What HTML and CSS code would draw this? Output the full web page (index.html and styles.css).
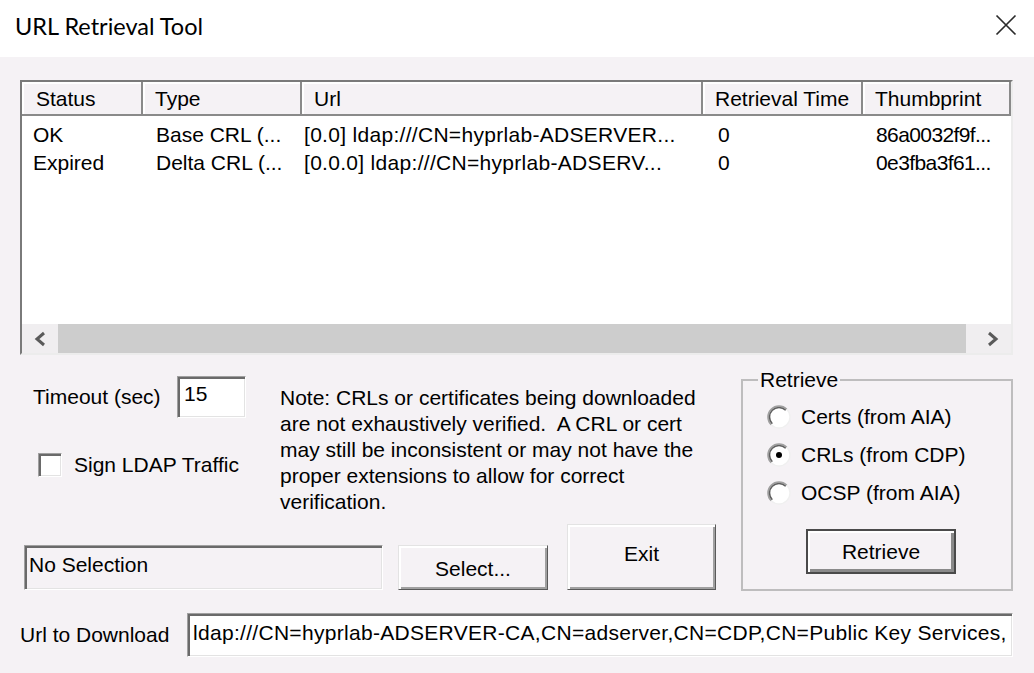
FILE: index.html
```html
<!DOCTYPE html>
<html>
<head>
<meta charset="utf-8">
<title>URL Retrieval Tool</title>
<link rel="stylesheet" href="styles.css">
</head>
<body>
<div class="window">
  <div class="titlebar">
    <span class="title">URL Retrieval Tool</span>
    <span class="close"><svg width="22" height="22" viewBox="0 0 22 22"><path d="M1.5 1.5L20.5 20.5M20.5 1.5L1.5 20.5" stroke="#2b2b2b" stroke-width="1.7" fill="none"/></svg></span>
  </div>
  <div class="client">
    <div class="list">
      <div class="hdr">
        <div class="hc c1">Status</div>
        <div class="hc c2">Type</div>
        <div class="hc c3">Url</div>
        <div class="hc c4">Retrieval Time</div>
        <div class="hc c5">Thumbprint</div>
      </div>
      <div class="rows">
        <div class="row">
          <div class="cell c1 p1">OK</div>
          <div class="cell c2 p2">Base CRL (...</div>
          <div class="cell c3 p3">[0.0] ldap:///CN=hyprlab-ADSERVER...</div>
          <div class="cell c4 p4">0</div>
          <div class="cell c5 p5">86a0032f9f...</div>
        </div>
        <div class="row">
          <div class="cell c1 p1">Expired</div>
          <div class="cell c2 p2">Delta CRL (...</div>
          <div class="cell c3 p3">[0.0.0] ldap:///CN=hyprlab-ADSERV...</div>
          <div class="cell c4 p4">0</div>
          <div class="cell c5 p5">0e3fba3f61...</div>
        </div>
      </div>
      <div class="hscroll">
        <div class="sbtn"><svg width="14" height="16" viewBox="0 0 14 16"><path d="M11 2L4 8L11 14" stroke="#5a5a5a" stroke-width="3" fill="none"/></svg></div>
        <div class="track"><div class="thumb"></div></div>
        <div class="sbtn"><svg width="14" height="16" viewBox="0 0 14 16"><path d="M3 2L10 8L3 14" stroke="#5a5a5a" stroke-width="3" fill="none"/></svg></div>
      </div>
    </div>

    <div class="middle">
      <div class="left">
        <div class="upper">
          <div class="opts">
            <div class="timeout">
              <span class="tlabel">Timeout (sec)</span>
              <div class="edit tbox">15</div>
            </div>
            <div class="check"><span class="box"></span><span>Sign LDAP Traffic</span></div>
          </div>
          <p class="note">Note: CRLs or certificates being downloaded<br>are not exhaustively verified.&nbsp; A CRL or cert<br>may still be inconsistent or may not have the<br>proper extensions to allow for correct<br>verification.</p>
        </div>
        <div class="lower">
          <div class="edit sel">No Selection</div>
          <div class="btn select">Select...</div>
          <div class="btn exit">Exit</div>
        </div>
      </div>
      <fieldset class="group">
        <legend>Retrieve</legend>
        <div class="radios">
          <div class="radio"><svg width="24" height="24" viewBox="0 0 24 24"><circle cx="12" cy="12" r="11" fill="#fff"/><path d="M4.22 19.78A11 11 0 0 1 19.78 4.22" stroke="#a0a0a0" stroke-width="1.6" fill="none"/><path d="M5.28 18.72A9.5 9.5 0 0 1 18.72 5.28" stroke="#5f5f5f" stroke-width="1.6" fill="none"/><path d="M19.78 4.22A11 11 0 0 1 4.22 19.78" stroke="#f0f0f0" stroke-width="1.4" fill="none"/></svg><span>Certs (from AIA)</span></div>
          <div class="radio"><svg width="24" height="24" viewBox="0 0 24 24"><circle cx="12" cy="12" r="11" fill="#fff"/><path d="M4.22 19.78A11 11 0 0 1 19.78 4.22" stroke="#a0a0a0" stroke-width="1.6" fill="none"/><path d="M5.28 18.72A9.5 9.5 0 0 1 18.72 5.28" stroke="#5f5f5f" stroke-width="1.6" fill="none"/><path d="M19.78 4.22A11 11 0 0 1 4.22 19.78" stroke="#f0f0f0" stroke-width="1.4" fill="none"/><circle cx="12" cy="12" r="3" fill="#000"/></svg><span>CRLs (from CDP)</span></div>
          <div class="radio"><svg width="24" height="24" viewBox="0 0 24 24"><circle cx="12" cy="12" r="11" fill="#fff"/><path d="M4.22 19.78A11 11 0 0 1 19.78 4.22" stroke="#a0a0a0" stroke-width="1.6" fill="none"/><path d="M5.28 18.72A9.5 9.5 0 0 1 18.72 5.28" stroke="#5f5f5f" stroke-width="1.6" fill="none"/><path d="M19.78 4.22A11 11 0 0 1 4.22 19.78" stroke="#f0f0f0" stroke-width="1.4" fill="none"/></svg><span>OCSP (from AIA)</span></div>
        </div>
        <div class="btn def">Retrieve</div>
      </fieldset>
    </div>

    <div class="urlrow">
      <span class="ulabel">Url to Download</span>
      <div class="edit url">ldap:///CN=hyprlab-ADSERVER-CA,CN=adserver,CN=CDP,CN=Public Key Services,</div>
    </div>
  </div>
</div>
</body>
</html>
```

FILE: styles.css
```css
* { box-sizing: border-box; }
html, body { margin: 0; padding: 0; }
body {
  width: 1034px;
  height: 673px;
  overflow: hidden;
  background: #f5f2f5;
  font-family: "Liberation Sans", Arial, sans-serif;
  font-size: 21px;
  color: #000;
}
.window { width: 1034px; height: 673px; display: flex; flex-direction: column; }

.titlebar {
  height: 57px;
  background: #fff;
  display: flex;
  align-items: center;
  justify-content: space-between;
  padding: 0 17px 0 15px;
}
.title { font-family: "Lato", "Noto Sans", sans-serif; font-size: 23.5px; color: #000; margin-top: -5px; }
.close { display: flex; margin-top: -7px; }

.client { flex: 1; padding: 23px 21px 0 20px; display: flex; flex-direction: column; }

/* list view */
.list {
  width: 993px;
  height: 275px;
  background: #fff;
  border: 2px solid;
  border-color: #7a7a7a #ececec #ececec #7a7a7a;
  display: flex;
  flex-direction: column;
}
.hdr { display: flex; height: 34px; flex: none; }
.hc {
  height: 34px;
  background: #f5f2f5;
  border-right: 2px solid #8a8a8a;
  border-bottom: 2px solid #8a8a8a;
  box-shadow: inset 2px 2px 0 #fff;
  padding-left: 12px;
  line-height: 34px;
  white-space: nowrap;
  overflow: hidden;
}
.c1 { width: 121px; }
.c2 { width: 159px; }
.c3 { width: 401px; }
.c4 { width: 160px; }
.c5 { width: 148px; }
.hc.c1 { padding-left: 14px; }
.rows { flex: 1; padding-top: 5px; }
.row { display: flex; height: 28px; line-height: 28px; }
.cell { white-space: nowrap; overflow: hidden; }
.p1 { padding-left: 11px; }
.p2 { padding-left: 13px; }
.p3 { padding-left: 2px; letter-spacing: 0.3px; }
.p4 { padding-left: 15px; }
.p5 { padding-left: 13px; letter-spacing: -0.6px; }

.hscroll { height: 29px; flex: none; display: flex; background: #f0eef0; }
.sbtn { width: 36px; display: flex; align-items: center; justify-content: center; }
.track { flex: 1; display: flex; padding-right: 9px; }
.thumb { flex: 1; background: #cdcdcd; }

/* middle */
.middle { display: flex; margin-top: 17px; height: 219px; }
.left { width: 721px; display: flex; flex-direction: column; justify-content: space-between; padding-top: 4px; }
.upper { display: flex; }
.opts { width: 260px; padding-left: 13px; }
.timeout { display: flex; align-items: center; height: 42px; }
.tlabel { width: 144px; white-space: nowrap; }
.edit {
  border: 1px solid;
  border-color: #a0a0a0 #ffffff #ffffff #a0a0a0;
  box-shadow: inset 2px 2px 0 #6a6a6a, inset -1px -1px 0 #e3e3e3;
  background: #fff;
  white-space: nowrap;
  overflow: hidden;
}
.tbox { width: 69px; height: 42px; padding: 5px 0 0 6px; line-height: 24px; }
.check { display: flex; align-items: center; margin: 35px 0 0 5px; white-space: nowrap; }
.box {
  width: 24px; height: 24px; margin-right: 12px; flex: none;
  background: #fff;
  border: 1px solid;
  border-color: #a0a0a0 #ffffff #ffffff #a0a0a0;
  box-shadow: inset 2px 2px 0 #6a6a6a, inset -1px -1px 0 #e3e3e3;
}
.note { margin: 9px 0 0 0; line-height: 26px; white-space: nowrap; }

.lower { display: flex; align-items: flex-end; padding-bottom: 1px; }
.sel { width: 359px; height: 45px; margin-left: 4px; background: #f5f2f5; padding: 7px 0 0 4px; line-height: 24px; }
.btn {
  display: flex; align-items: center; justify-content: center;
  background: #f5f2f5;
  border: 1px solid;
  border-color: #e3e3e3 #5a5a5a #5a5a5a #e3e3e3;
  box-shadow: inset 2px 2px 0 #fff, inset -2px -2px 0 #a0a0a0;
}
.select { width: 150px; height: 45px; margin-left: 15px; padding-top: 2px; }
.exit { width: 149px; height: 66px; margin-left: 19px; padding-bottom: 6px; }

.group {
  margin: 0;
  width: 272px;
  height: 219px;
  border: 2px solid #bebdbe;
  padding: 0 0 0 24px;
}
.group legend { margin-left: -9px; padding: 0 2px; line-height: 16px; }
.radios { padding-top: 10px; }
.radio { display: flex; align-items: center; height: 38px; white-space: nowrap; }
.radio svg { margin-right: 10px; flex: none; }
.def {
  width: 150px; height: 45px; margin: 17px 0 0 39px;
  border: 2px solid #4a4a4a;
  box-shadow: inset 2px 2px 0 #fff, inset -3px -3px 0 #8a8a8a;
}

.urlrow { display: flex; align-items: center; margin-top: 22px; }
.ulabel { width: 167px; white-space: nowrap; }
.url { width: 826px; height: 44px; padding: 7px 0 0 5px; line-height: 24px; letter-spacing: 0.3px; }
```
